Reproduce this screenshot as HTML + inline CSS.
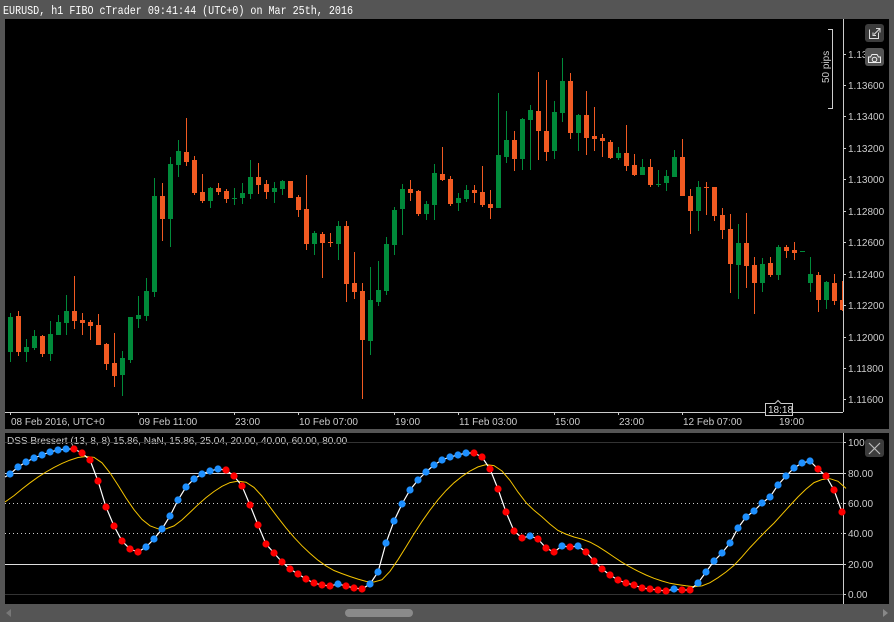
<!DOCTYPE html>
<html><head><meta charset="utf-8"><style>
html,body{margin:0;padding:0;background:#555;}
svg{display:block;}
text{font-family:"Liberation Sans",sans-serif;}
</style></head><body>
<svg id="s" width="894" height="622" viewBox="0 0 894 622" xmlns="http://www.w3.org/2000/svg">
<rect x="0" y="0" width="894" height="622" fill="#555"/>
<text x="3" y="14" fill="#fff" font-size="12" style="font-family:'Liberation Mono',monospace" textLength="350" lengthAdjust="spacingAndGlyphs">EURUSD, h1 FIBO cTrader 09:41:44 (UTC+0) on Mar 25th, 2016</text>
<rect x="5" y="19" width="884" height="410" fill="#000"/>
<rect x="5" y="433" width="884" height="171" fill="#000"/>
<g id="candles"></g>
<line x1="843.5" y1="19" x2="843.5" y2="412" stroke="#ccc" stroke-width="1"/>
<g fill="#ccc" font-size="10" id="pl">
<text x="848" y="58">1.13</text>
<text x="848" y="89">1.13600</text>
<text x="848" y="120">1.13400</text>
<text x="848" y="152">1.13200</text>
<text x="848" y="183">1.13000</text>
<text x="848" y="215">1.12800</text>
<text x="848" y="246">1.12600</text>
<text x="848" y="278">1.12400</text>
<text x="848" y="309">1.12200</text>
<text x="848" y="341">1.12000</text>
<text x="848" y="372">1.11800</text>
<text x="848" y="403">1.11600</text>
</g>
<g stroke="#ccc"><line x1="843" y1="54.5" x2="846" y2="54.5"/><line x1="843" y1="85.5" x2="846" y2="85.5"/><line x1="843" y1="116.5" x2="846" y2="116.5"/><line x1="843" y1="148.5" x2="846" y2="148.5"/><line x1="843" y1="179.5" x2="846" y2="179.5"/><line x1="843" y1="211.5" x2="846" y2="211.5"/><line x1="843" y1="242.5" x2="846" y2="242.5"/><line x1="843" y1="274.5" x2="846" y2="274.5"/><line x1="843" y1="305.5" x2="846" y2="305.5"/><line x1="843" y1="337.5" x2="846" y2="337.5"/><line x1="843" y1="368.5" x2="846" y2="368.5"/><line x1="843" y1="399.5" x2="846" y2="399.5"/></g>
<path d="M828 29.5H832.5V108.5H828" fill="none" stroke="#ccc"/>
<text transform="translate(829,83) rotate(-90)" fill="#ccc" font-size="10">50 pips</text>
<rect x="865" y="24" width="19" height="18" rx="3" fill="#3c3c3c"/>
<path d="M869.5 29.5v9h9v-6M876 28.5h4v4M880 28.5l-6 6M873 32.5v3h3" fill="none" stroke="#ddd" stroke-width="1"/>
<rect x="865" y="48" width="19" height="18" rx="3" fill="#555"/>
<path d="M868.5 62.5v-5.5h2l1.5-2.5h5l1.5 2.5h2v5.5z" fill="none" stroke="#eee"/>
<circle cx="874.5" cy="59.5" r="2.3" fill="none" stroke="#eee"/>
<line x1="5" y1="412.5" x2="843" y2="412.5" stroke="#ccc"/>
<g stroke="#ccc"><line x1="10.5" y1="412" x2="10.5" y2="415"/><line x1="138.5" y1="412" x2="138.5" y2="415"/><line x1="234.5" y1="412" x2="234.5" y2="415"/><line x1="298.5" y1="412" x2="298.5" y2="415"/><line x1="394.5" y1="412" x2="394.5" y2="415"/><line x1="458.5" y1="412" x2="458.5" y2="415"/><line x1="554.5" y1="412" x2="554.5" y2="415"/><line x1="618.5" y1="412" x2="618.5" y2="415"/><line x1="682.5" y1="412" x2="682.5" y2="415"/><line x1="778.5" y1="412" x2="778.5" y2="415"/></g>
<g fill="#ccc" font-size="10">
<text x="11" y="425">08 Feb 2016, UTC+0</text>
<text x="139" y="425">09 Feb 11:00</text>
<text x="235" y="425">23:00</text>
<text x="299" y="425">10 Feb 07:00</text>
<text x="395" y="425">19:00</text>
<text x="459" y="425">11 Feb 03:00</text>
<text x="555" y="425">15:00</text>
<text x="619" y="425">23:00</text>
<text x="683" y="425">12 Feb 07:00</text>
<text x="779" y="425">19:00</text>
</g>
<path d="M765.5 403.5H775l3-3 3 3h11.5v12h-27z" fill="#000" stroke="#ccc"/>
<text x="768" y="413" fill="#ddd" font-size="10">18:18</text>
<text x="7" y="444" fill="#ccc" font-size="10">DSS Bressert (13, 8, 8) 15.86, NaN, 15.86, 25.04, 20.00, 40.00, 60.00, 80.00</text>
<line x1="5" y1="442.5" x2="843" y2="442.5" stroke="#333"/>
<line x1="5" y1="594.5" x2="843" y2="594.5" stroke="#333"/>
<line x1="5" y1="473.5" x2="843" y2="473.5" stroke="#ddd"/>
<line x1="5" y1="564.5" x2="843" y2="564.5" stroke="#ddd"/>
<line x1="5" y1="503.5" x2="843" y2="503.5" stroke="#ccc" stroke-dasharray="1,3"/>
<line x1="5" y1="533.5" x2="843" y2="533.5" stroke="#ccc" stroke-dasharray="1,3"/>
<line x1="843.5" y1="433" x2="843.5" y2="604" stroke="#ccc"/>
<g stroke="#ccc"><line x1="843" y1="442.5" x2="846" y2="442.5"/><line x1="843" y1="473.5" x2="846" y2="473.5"/><line x1="843" y1="503.5" x2="846" y2="503.5"/><line x1="843" y1="533.5" x2="846" y2="533.5"/><line x1="843" y1="564.5" x2="846" y2="564.5"/><line x1="843" y1="594.5" x2="846" y2="594.5"/></g>
<g fill="#ccc" font-size="10">
<text x="848" y="446">100.</text>
<text x="848" y="477">80.00</text>
<text x="848" y="507">60.00</text>
<text x="848" y="537">40.00</text>
<text x="848" y="568">20.00</text>
<text x="848" y="598">0.00</text>
</g>
<rect x="865" y="439" width="19" height="18" rx="3" fill="#3c3c3c"/>
<path d="M869 443l11 11M880 443l-11 11" stroke="#bbb" stroke-width="1.2"/>
<g id="ind"></g>
<rect x="345" y="609" width="68" height="8" rx="4" fill="#8a8a8a"/>
<path d="M883 609l5 4-5 4z" fill="#888"/>
<path d="M11 609l-5 4 5 4z" fill="#777"/>
</svg>
<script>
var NS="http://www.w3.org/2000/svg";
function el(t,a,p){var e=document.createElementNS(NS,t);for(var k in a)e.setAttribute(k,a[k]);p.appendChild(e);return e;}
var c4=[["G",621,726,609,756],["R",618,726,603,738],["G",711,726,687,756],["G",678,714,660,720],["R",678,732,675,741],["G",672,732,633,753],["G",636,675,615,675],["G",603,639,555,675],["R",603,633,498,657],["R",630,639,609,675],["R",636,648,630,690],["R",645,705,612,705],["R",702,762,699,780],["R",759,798,669,831],["G",744,795,723,858],["G",621,750,621,759],["G",615,627,558,654],["G",543,618,504,633],["G",258,546,204,561],["R",258,327,219,393],["G",162,327,141,411],["G",123,165,90,201],["R",126,156,24,168],["R",150,249,138,255],["R",246,273,192,279],["G",234,273,231,294],["R",234,246,219,255],["R",243,267,237,279],["G",264,267,234,285],["G",249,264,219,282],["G",201,252,150,267],["R",201,225,159,252],["R",222,246,210,267],["G",234,246,216,279],["G",213,237,210,255],["R",213,264,213,264],["R",261,300,255,321],["R",297,402,195,420],["G",369,402,363,435],["R",372,399,366,504],["R",396,399,369,411],["G",348,402,333,450],["R",348,522,333,576],["R",519,546,426,567],["R",543,690,519,867],["G",570,693,471,735],["G",540,576,453,588],["G",402,543,381,555],["G",300,405,291,435],["G",237,297,222,375],["R",237,249,210,273],["R",243,312,240,318]];
var c5=[["G",462,492,453,510],["G",369,465,342,510],["R",372,390,291,393],["R",387,462,378,468],["G",444,459,429,483],["G",420,447,405,456],["R",420,429,405,459],["R",426,465,348,471],["R",462,474,420,507],["G",315,474,129,474],["G",270,321,183,339],["R",270,327,243,363],["G",207,327,204,360],["G",180,210,165,360],["R",183,243,66,330],["R",243,306,90,333],["G",186,303,153,327],["G",93,189,24,216],["R",93,249,69,267],["G",195,249,192,303],["R",195,264,123,315],["R",258,267,171,303],["R",264,273,252,321],["R",276,324,270,327],["G",309,324,291,330],["R",309,348,225,363],["R",345,375,312,378],["G",351,375,327,375],["R",351,405,327,411],["G",402,405,360,411],["G",378,399,360,423],["G",321,381,300,381],["R",321,438,267,438],["R",438,483,417,552],["G",411,483,393,543],["R",411,414,396,495],["R",411,498,411,513],["R",495,540,474,567],["R",537,642,492,729],["G",579,645,522,747],["R",579,648,489,714],["R",645,699,621,792],["G",642,699,624,726],["R",639,675,621,681],["G",591,675,585,690],["R",591,603,585,624],["R",600,609,576,630],["G",603,606,603,606],["G",672,699,621,726],["R",675,750,666,786],["G",696,750,693,777],["R",699,753,672,765],["R",750,780,693,783]];
var g=document.getElementById("candles");
var all=[];c4.forEach(function(c){all.push([c[0],c[1]/3+110,c[2]/3+110,c[3]/3+110,c[4]/3+110]);});
c5.forEach(function(c){all.push([c[0],c[1]/3+50,c[2]/3+50,c[3]/3+50,c[4]/3+50]);});
all.forEach(function(c,i){var x=10+8*i;if(x>843)return;var col=c[0]=="G"?"#008a3a":"#f15a22";
el("rect",{x:x,y:c[3],width:1,height:Math.max(1,c[4]-c[3]),fill:col},g);
var w=Math.min(5,843-(x-2));el("rect",{x:x-2,y:c[1],width:w,height:Math.max(1,c[2]-c[1]),fill:col},g);});
var ys=[474,467,462,458,455,452,450,449,449,453,460,481,507,526,541,549,552,547,539,529,516,500,487,479,474,471,469,470,476,486,505,525,544,553,562,569,574,579,583,585,586,584,586,588,589,584,572,543,521,504,490,480,472,465,460,457,455,453,453,457,469,489,512,531,538,536,539,548,552,546,547,546,552,561,569,575,580,583,585,588,589,590,591,589,590,590,583,572,561,553,543,528,517,511,503,497,485,476,468,463,461,469,476,490,512];
var ind=document.getElementById("ind");
var sy=[],e=502;for(var i=0;i<ys.length;i++){e=e+0.23*(ys[i]-e);sy.push(e);}
var d="";for(var i=0;i<sy.length;i++){d+=(i?"L":"M")+(10+8*i+4)+" "+sy[i].toFixed(1);}
el("path",{d:"M5 502L14 "+sy[0].toFixed(1)+d.replace(/^M/,"L"),fill:"none",stroke:"#f5c400","stroke-width":1},ind);
var d2="";for(var i=0;i<ys.length;i++){d2+=(i?"L":"M")+(10+8*i)+" "+ys[i];}
el("path",{d:"M5 477L"+d2.slice(1),fill:"none",stroke:"#fff","stroke-width":1.2},ind);
for(var i=0;i<ys.length;i++){var up=i==0||ys[i]<ys[i-1];el("circle",{cx:10+8*i,cy:ys[i],r:3.6,fill:up?"#1e90ff":"#ff0000"},ind);}
</script>
</body></html>
